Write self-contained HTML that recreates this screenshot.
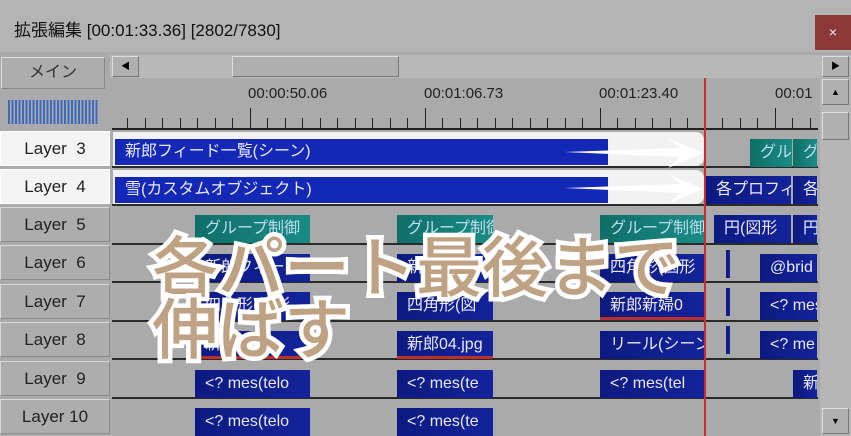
<!DOCTYPE html><html><head><meta charset="utf-8"><style>
*{margin:0;padding:0;box-sizing:border-box}
body{width:851px;height:436px;overflow:hidden;background:#aaaaaa;position:relative;font-family:"Liberation Sans","Noto Sans CJK JP",sans-serif}
.a{position:absolute}
.lay{position:absolute;left:0;width:110px;height:35px;background:#adadad;border:1px solid #8a8a8a;border-top-color:#d8d8d8;border-left-color:#d8d8d8;font-size:17px;color:#222;text-align:center;line-height:33px}
.lay.w{background:#f4f4f4;border-color:#fff}
.sep{position:absolute;left:112px;width:706px;height:2px;background:#2a2a2a}
.c{position:absolute;height:28px;font-size:16px;color:#e8e8ff;line-height:28px;padding-left:10px;white-space:nowrap;overflow:hidden;background:linear-gradient(90deg,#0c1a80,#13239a)}
.t{background:linear-gradient(90deg,#0f6e68,#1a8c85);color:#bde}
.r{border-bottom:3px solid #b83030}
.tk{position:absolute;top:108px;width:1px;height:20px;background:#222}
.big{position:absolute;font-family:"Noto Sans CJK JP",sans-serif;font-weight:500;font-size:66px;color:#bfa283;-webkit-text-stroke:9px #fff;paint-order:stroke fill;letter-spacing:0;line-height:66px;white-space:nowrap}
</style></head><body>
<div class="a" style="left:0;top:0;width:851px;height:52px;background:#b4b4b4"></div>
<div class="a" style="left:14px;top:16px;font-size:17px;color:#111">拡張編集 [00:01:33.36] [2802/7830]</div>
<div class="a" style="left:815px;top:15px;width:36px;height:35px;background:#8c3838;color:#eee;text-align:center;line-height:35px;font-size:14px">×</div>
<div class="a" style="left:110px;top:55px;width:741px;height:23px;background:#b8b8b8"></div>
<div class="a" style="left:1px;top:57px;width:104px;height:32px;background:#adadad;border:1px solid #888;border-top-color:#ddd;border-left-color:#ddd;text-align:center;line-height:30px;font-size:16px;color:#333">メイン</div>
<div class="a" style="left:112px;top:56px;width:27px;height:21px;background:#b0b0b0;border:1px solid #777;border-top-color:#ddd;border-left-color:#ddd;font-size:9px;text-align:center;line-height:19px">◀</div>
<div class="a" style="left:232px;top:56px;width:167px;height:21px;background:#afafaf;border:1px solid #777;border-top-color:#ddd;border-left-color:#ddd"></div>
<div class="a" style="left:822px;top:56px;width:27px;height:21px;background:#b0b0b0;border:1px solid #777;border-top-color:#ddd;border-left-color:#ddd;font-size:9px;text-align:center;line-height:19px">▶</div>
<div class="a" style="left:8px;top:100px;width:91px;height:24px;background:repeating-linear-gradient(90deg,#3e6bc0 0 2px,transparent 2px 3.5px)"></div>
<div class="a" style="left:112px;top:128px;width:706px;height:2px;background:#222"></div>
<div class="a" style="left:248px;top:85px;font-size:15px;color:#222">00:00:50.06</div>
<div class="a" style="left:424px;top:85px;font-size:15px;color:#222">00:01:06.73</div>
<div class="a" style="left:599px;top:85px;font-size:15px;color:#222">00:01:23.40</div>
<div class="a" style="left:775px;top:85px;font-size:15px;color:#222">00:01</div>
<div id="ticks"></div>
<script>
var h='';for(var x=127;x<818;x+=17.5){var m=Math.abs((x-249)%175)<1||Math.abs((x-249)%175-175)<1;h+='<div class="tk" style="left:'+Math.round(x)+'px;top:'+(m?108:118)+'px;height:'+(m?20:10)+'px"></div>';}document.getElementById('ticks').innerHTML=h;
</script>
<div class="a" style="left:820px;top:79px;width:31px;height:357px;background:#b6b6b6"></div>
<div class="a" style="left:822px;top:79px;width:27px;height:26px;background:#b0b0b0;border:1px solid #777;border-top-color:#ddd;border-left-color:#ddd;font-size:9px;text-align:center;line-height:24px">▲</div>
<div class="a" style="left:822px;top:112px;width:27px;height:28px;background:#b0b0b0;border:1px solid #777;border-top-color:#ddd;border-left-color:#ddd"></div>
<div class="a" style="left:822px;top:408px;width:27px;height:26px;background:#b0b0b0;border:1px solid #777;border-top-color:#ddd;border-left-color:#ddd;font-size:9px;text-align:center;line-height:24px">▼</div>

<div class="lay w" style="top:131px">Layer&nbsp;&nbsp;3</div>
<div class="lay w" style="top:169px">Layer&nbsp;&nbsp;4</div>
<div class="lay" style="top:207px">Layer&nbsp;&nbsp;5</div>
<div class="lay" style="top:245px">Layer&nbsp;&nbsp;6</div>
<div class="lay" style="top:284px">Layer&nbsp;&nbsp;7</div>
<div class="lay" style="top:322px">Layer&nbsp;&nbsp;8</div>
<div class="lay" style="top:361px">Layer&nbsp;&nbsp;9</div>
<div class="lay" style="top:399px">Layer 10</div>
<div class="sep" style="top:166px"></div><div class="sep" style="top:204px"></div><div class="sep" style="top:243px"></div><div class="sep" style="top:281px"></div><div class="sep" style="top:320px"></div><div class="sep" style="top:358px"></div><div class="sep" style="top:397px"></div>

<div class="a" style="left:113px;top:132px;width:591px;height:34px;background:#f2f2f2;border-radius:0 8px 8px 0"></div>
<div class="c" style="left:115px;top:139px;width:493px;height:26px;line-height:26px;background:#1428b8">新郎フィード一覧(シーン)</div>
<div class="a" style="left:113px;top:170px;width:591px;height:34px;background:#f2f2f2;border-radius:0 8px 8px 0"></div>
<div class="c" style="left:115px;top:177px;width:493px;height:26px;line-height:26px;background:#1428b8">雪(カスタムオブジェクト)</div>
<svg class="a" style="left:560px;top:136px" width="145" height="66"><path d="M5 16 L120 12 L108 2 L143 17 L108 32 L120 21 Z" fill="#fff"/><path d="M5 52 L120 48 L108 38 L143 53 L108 68 L120 57 Z" fill="#fff"/></svg>

<div class="c t" style="left:750px;top:139px;width:42px">グル</div>
<div class="c t" style="left:793px;top:139px;width:24px">グ</div>
<div class="c" style="left:706px;top:176px;width:85px">各プロフィ</div>
<div class="c" style="left:793px;top:176px;width:24px">各</div>

<div class="c t" style="left:195px;top:215px;width:115px">グループ制御</div>
<div class="c t" style="left:397px;top:215px;width:96px">グループ制御</div>
<div class="c t" style="left:600px;top:215px;width:104px">グループ制御</div>
<div class="c" style="left:714px;top:215px;width:77px">円(図形</div>
<div class="c" style="left:793px;top:215px;width:24px">円</div>

<div class="c" style="left:195px;top:254px;width:115px">新郎フィード</div>
<div class="c" style="left:397px;top:254px;width:96px">新郎</div>
<div class="c" style="left:600px;top:254px;width:104px">四角形(図形</div>
<div class="c" style="left:726px;top:250px;width:4px;padding:0"></div>
<div class="c" style="left:760px;top:254px;width:57px">@brid</div>

<div class="c" style="left:195px;top:292px;width:115px">四角形(図形</div>
<div class="c" style="left:397px;top:292px;width:96px">四角形(図</div>
<div class="c r" style="left:600px;top:292px;width:104px">新郎新婦0</div>
<div class="c" style="left:726px;top:288px;width:4px;padding:0"></div>
<div class="c" style="left:760px;top:292px;width:57px">&lt;? mes</div>

<div class="c r" style="left:195px;top:331px;width:115px">新郎.jpg</div>
<div class="c r" style="left:397px;top:331px;width:96px">新郎04.jpg</div>
<div class="c" style="left:600px;top:331px;width:104px">リール(シーン</div>
<div class="c" style="left:726px;top:326px;width:4px;padding:0"></div>
<div class="c" style="left:760px;top:331px;width:57px">&lt;? me</div>

<div class="c" style="left:195px;top:370px;width:115px">&lt;? mes(telo</div>
<div class="c" style="left:397px;top:370px;width:96px">&lt;? mes(te</div>
<div class="c" style="left:600px;top:370px;width:104px">&lt;? mes(tel</div>
<div class="c" style="left:793px;top:370px;width:24px">新</div>
<div class="c" style="left:195px;top:408px;width:115px">&lt;? mes(telo</div>
<div class="c" style="left:397px;top:408px;width:96px">&lt;? mes(te</div>

<div class="a" style="left:704px;top:78px;width:2px;height:358px;background:#c83030"></div>

<div class="big" style="left:152px;top:230px">各パート最後まで</div>
<div class="big" style="left:152px;top:292px">伸ばす</div>
</body></html>
